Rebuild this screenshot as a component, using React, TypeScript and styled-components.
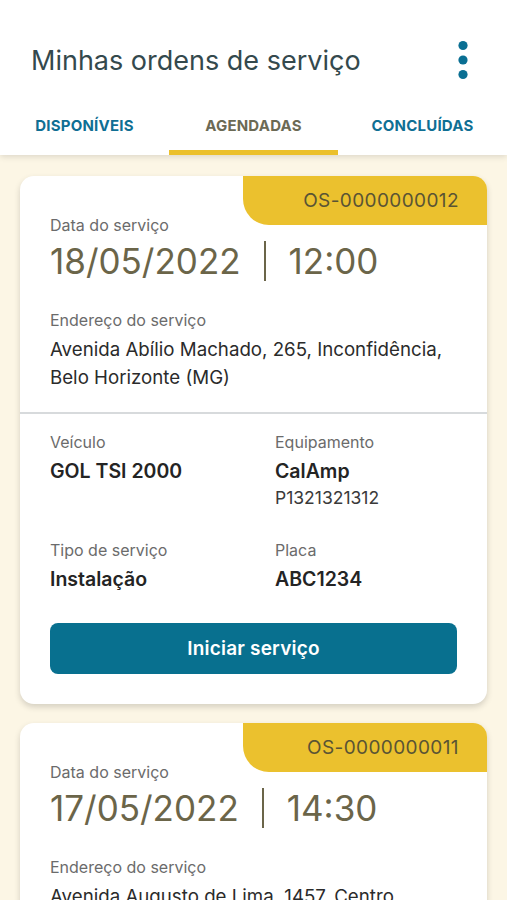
import React from "react";
import styled, { createGlobalStyle } from "styled-components";

const Global = createGlobalStyle`
  html, body { margin: 0; padding: 0; }
  body { background: #fcf6e5; font-family: Inter, "Noto Sans", sans-serif; -webkit-font-smoothing: antialiased; }
  * { box-sizing: border-box; }
`;

const Page = styled.div`
  width: 507px;
  height: 900px;
  overflow: hidden;
  background: #fcf6e5;
  display: flex;
  flex-direction: column;
`;

const Header = styled.header`
  background: #ffffff;
  box-shadow: 0 2px 6px rgba(0, 0, 0, 0.12);
  position: relative;
  z-index: 1;
`;

const TitleBar = styled.div`
  height: 100px;
  padding: 20px 38px 0 31px;
  display: flex;
  align-items: center;
  justify-content: space-between;
`;

const Title = styled.h1`
  margin: 0;
  font-size: 27px;
  font-weight: 400;
  color: #34494d;
  letter-spacing: 0;
`;

const MenuButton = styled.button`
  border: 0;
  background: none;
  padding: 0;
  width: 12px;
  height: 40px;
  display: flex;
  align-items: center;
  justify-content: center;
`;

const Tabs = styled.nav`
  display: grid;
  grid-template-columns: repeat(3, 1fr);
  height: 55px;
`;

const Tab = styled.div<{ $active?: boolean }>`
  display: flex;
  align-items: center;
  justify-content: center;
  font-size: 15px;
  font-weight: 700;
  letter-spacing: 0.2px;
  text-transform: uppercase;
  color: ${(p) => (p.$active ? "#6b6a55" : "#0f6f94")};
  border-bottom: 5px solid ${(p) => (p.$active ? "#ebc02c" : "transparent")};
  padding-top: 1px;
`;

const List = styled.div`
  padding: 21px 20px;
  display: flex;
  flex-direction: column;
  gap: 19px;
`;

const Card = styled.article`
  background: #ffffff;
  border-radius: 14px;
  box-shadow: 0 3px 6px rgba(0, 0, 0, 0.16);
  position: relative;
  overflow: hidden;
  flex-shrink: 0;
`;

const Badge = styled.div`
  position: absolute;
  top: 0;
  right: 0;
  width: 244px;
  height: 49px;
  background: #ebc12e;
  border-bottom-left-radius: 26px;
  display: flex;
  align-items: center;
  justify-content: flex-end;
  padding-right: 28px;
  font-size: 19px;
  color: #5a5434;
  letter-spacing: 0.4px;
`;

const Top = styled.section`
  padding: 39px 30px 20px;
  border-bottom: 2px solid #d7dadc;
`;

const Label = styled.div`
  font-size: 16px;
  line-height: 20px;
  color: #6b6b6b;
`;

const DateRow = styled.div`
  display: flex;
  align-items: center;
  gap: 23px;
  font-size: 35px;
  line-height: 44px;
  color: #6b6549;
  margin-top: 4px;
`;

const Sep = styled.span`
  width: 2px;
  height: 40px;
  background: #6b6549;
`;

const AddressBlock = styled.div`
  margin-top: 27px;
`;

const Address = styled.div`
  margin-top: 6px;
  font-size: 18.7px;
  line-height: 28px;
  color: #2b2b2b;
`;

const Bottom = styled.section`
  padding: 18px 30px 30px;
`;

const InfoGrid = styled.div`
  display: grid;
  grid-template-columns: 225px 1fr;
  row-gap: 31px;
`;

const Value = styled.div`
  margin-top: 7px;
  font-size: 19.5px;
  line-height: 24px;
  font-weight: 600;
  color: #242424;
`;

const Sub = styled.div`
  margin-top: 4px;
  font-size: 17.5px;
  line-height: 22px;
  color: #3a3a3a;
`;

const PrimaryButton = styled.button`
  margin-top: 32px;
  width: 100%;
  height: 51px;
  border: 0;
  border-radius: 8px;
  background: #08708f;
  color: #ffffff;
  font-family: inherit;
  font-size: 19px;
  font-weight: 600;
  letter-spacing: 0.2px;
`;

type Order = {
  os: string;
  date: string;
  time: string;
  address: string[];
  vehicle: string;
  equipment: string;
  serial: string;
  type: string;
  plate: string;
};

const orders: Order[] = [
  {
    os: "OS-0000000012",
    date: "18/05/2022",
    time: "12:00",
    address: ["Avenida Abílio Machado, 265, Inconfidência,", "Belo Horizonte (MG)"],
    vehicle: "GOL TSI 2000",
    equipment: "CalAmp",
    serial: "P1321321312",
    type: "Instalação",
    plate: "ABC1234",
  },
  {
    os: "OS-0000000011",
    date: "17/05/2022",
    time: "14:30",
    address: ["Avenida Augusto de Lima, 1457, Centro,", "Belo Horizonte (MG)"],
    vehicle: "GOL TSI 2000",
    equipment: "CalAmp",
    serial: "P1321321312",
    type: "Instalação",
    plate: "ABC1234",
  },
];

function OrderCard({ o }: { o: Order }) {
  return (
    <Card>
      <Badge>{o.os}</Badge>
      <Top>
        <Label>Data do serviço</Label>
        <DateRow>
          <span>{o.date}</span>
          <Sep />
          <span>{o.time}</span>
        </DateRow>
        <AddressBlock>
          <Label>Endereço do serviço</Label>
          <Address>
            {o.address[0]}
            <br />
            {o.address[1]}
          </Address>
        </AddressBlock>
      </Top>
      <Bottom>
        <InfoGrid>
          <div>
            <Label>Veículo</Label>
            <Value>{o.vehicle}</Value>
          </div>
          <div>
            <Label>Equipamento</Label>
            <Value>{o.equipment}</Value>
            <Sub>{o.serial}</Sub>
          </div>
          <div>
            <Label>Tipo de serviço</Label>
            <Value>{o.type}</Value>
          </div>
          <div>
            <Label>Placa</Label>
            <Value>{o.plate}</Value>
          </div>
        </InfoGrid>
        <PrimaryButton>Iniciar serviço</PrimaryButton>
      </Bottom>
    </Card>
  );
}

export default function App() {
  return (
    <Page>
      <Global />
      <Header>
        <TitleBar>
          <Title>Minhas ordens de serviço</Title>
          <MenuButton aria-label="menu">
            <svg width="10" height="40" viewBox="0 0 10 40">
              <circle cx="5" cy="5.5" r="4.6" fill="#0a6f93" />
              <circle cx="5" cy="20" r="4.6" fill="#0a6f93" />
              <circle cx="5" cy="34.5" r="4.6" fill="#0a6f93" />
            </svg>
          </MenuButton>
        </TitleBar>
        <Tabs>
          <Tab>Disponíveis</Tab>
          <Tab $active>Agendadas</Tab>
          <Tab>Concluídas</Tab>
        </Tabs>
      </Header>
      <List>
        {orders.map((o) => (
          <OrderCard key={o.os} o={o} />
        ))}
      </List>
    </Page>
  );
}
